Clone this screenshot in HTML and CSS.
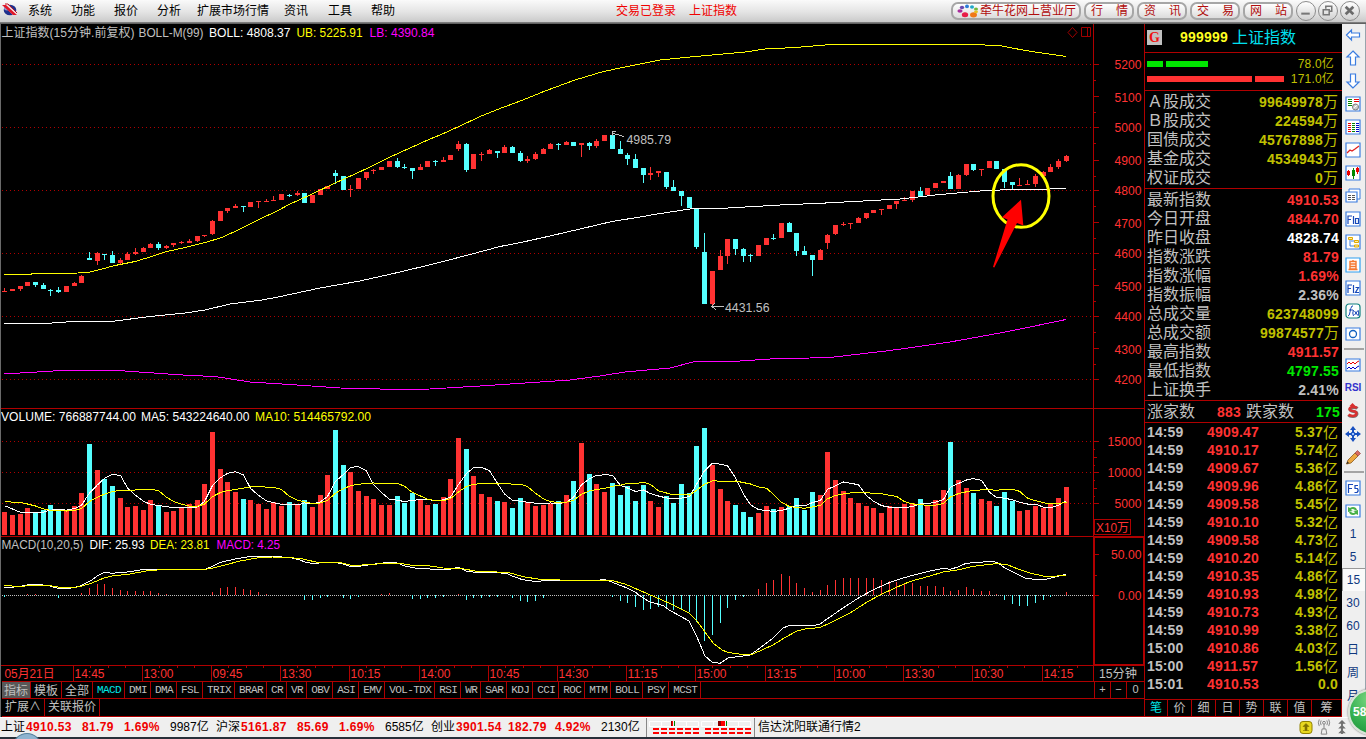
FILE: index.html
```html
<!DOCTYPE html>
<html lang="zh-CN">
<head>
<meta charset="utf-8">
<title>上证指数</title>
<link rel="stylesheet" href="styles.css">
</head>
<body>
<div class="app">
  <header class="topbar">
    <svg class="logo" viewBox="0 0 16 14"><ellipse cx="8" cy="7" rx="6.3" ry="5.3" fill="#20308c"/><ellipse cx="5" cy="5" rx="3" ry="2.5" fill="#8fa0d8"/><path d="M0 1h5l10 9v2h-4z" fill="#f6e8ea"/><path d="M0 2l4 0 11 10-4 0z" fill="#e01828"/><path d="M3 1l3 0 9 9" stroke="#c01020" fill="none"/></svg>
    <nav class="menu">
      <span>系统</span><span>功能</span><span>报价</span><span>分析</span><span class="wide">扩展市场行情</span><span>资讯</span><span>工具</span><span>帮助</span>
    </nav>
    <div class="login"><span>交易已登录</span><span>上证指数</span></div>
    <div class="buttons">
      <a class="pill brand"><svg viewBox="0 0 22 14"><g><ellipse cx="5" cy="3.5" rx="2.2" ry="1.8" fill="#6a48b0"/><ellipse cx="10" cy="2.4" rx="2" ry="1.8" fill="#2c7cd8"/><ellipse cx="15" cy="3" rx="2" ry="1.7" fill="#22a8c8"/><ellipse cx="19" cy="5" rx="2" ry="1.6" fill="#74b83a"/><ellipse cx="3" cy="7" rx="2.6" ry="1.8" fill="#a82c9c"/><ellipse cx="8" cy="10.8" rx="3.2" ry="2.5" fill="#e81c48"/><ellipse cx="16.5" cy="10.8" rx="3.5" ry="2.6" fill="#f07818"/><ellipse cx="19" cy="7.8" rx="2" ry="1.4" fill="#e8c020"/></g></svg><b>牵牛花网上营业厅</b></a>
      <a class="pill"><b>行</b><b>情</b></a><a class="pill"><b>资</b><b>讯</b></a><a class="pill"><b>交</b><b>易</b></a><a class="pill"><b>网</b><b>站</b></a>
    </div>
    <div class="winbtns">
      <i><svg viewBox="0 0 20 20"><path d="M5 12.5h10v2.4H5z" fill="#777"/></svg></i>
      <i><svg viewBox="0 0 20 20"><g fill="none" stroke="#777" stroke-width="1.8"><path d="M8 8V5h7v6h-3"/><path d="M5 9h7v6H5z"/></g></svg></i>
      <i><svg viewBox="0 0 20 20"><path d="M5.5 5.5l9 9m0-9l-9 9" stroke="#6b6b6b" stroke-width="3.2"/></svg></i>
    </div>
  </header>

  <main class="main">
    <section class="charts">
      <svg id="plot" class="plot" viewBox="0 24 1144 657"></svg>
      <div class="tabs">
        <div class="taglist"><span class="cj on">指标</span><span class="cj">模板</span><span class="cj">全部</span><span class="cur">MACD</span><span>DMI</span><span>DMA</span><span>FSL</span><span>TRIX</span><span>BRAR</span><span>CR</span><span>VR</span><span>OBV</span><span>ASI</span><span>EMV</span><span>VOL-TDX</span><span>RSI</span><span>WR</span><span>SAR</span><span>KDJ</span><span>CCI</span><span>ROC</span><span>MTM</span><span>BOLL</span><span>PSY</span><span>MCST</span></div>
        <div class="zoomers"><span>+</span><span>−</span><span>0</span></div>
      </div>
      <div class="tabs2"><span>扩展∧</span><span>关联报价</span></div>
    </section>

    <aside class="quote">
      <div class="title"><em>G</em><b>999999</b><span>上证指数</span></div>
      <div class="flows">
        <div class="flow up"><i style="width:16px"></i><i style="width:42px"></i><span>78.0亿</span></div>
        <div class="flow down"><i style="width:105px"></i><i style="width:29px"></i><span>171.0亿</span></div>
      </div>
      <div class="block" id="turnover"></div>
      <div class="block" id="index"></div>
      <div class="breadth"><span>涨家数</span><b class="r">883</b><span>跌家数</span><b class="g">175</b></div>
      <div class="ticks" id="ticks"></div>
      <div class="qtabs"><span class="on">笔</span><span>价</span><span>细</span><span>日</span><span>势</span><span>联</span><span>值</span><span>筹</span></div>
    </aside>

    <aside class="tools">
      <i><svg viewBox="0 0 16 16"><path d="M1.5 8L6.5 3v3h8v4h-8v3z" fill="#fff" stroke="#3b7de0" stroke-width="1.2"/></svg></i>
      <i><svg viewBox="0 0 16 16"><path d="M8 1L14 7h-3.500v8h-5V7H2z" fill="#fff" stroke="#3b7de0" stroke-width="1.2"/></svg></i>
      <i><svg viewBox="0 0 16 16"><path d="M8 15L2 9h3.500V1h5v8H14z" fill="#fff" stroke="#3b7de0" stroke-width="1.2"/></svg></i>
      <i><svg viewBox="0 0 16 16"><path class="fr" d="M1 1h14v14H1z"/><path d="M3 3.500h4M3 5.500h4M3 7.500h4M3 9.500h4" stroke="#080"/><path d="M9 3.500h5M9 5.500h5" stroke="#e00"/><circle cx="10.500" cy="11" r="3" fill="#ccc" stroke="#777"/><path d="M8.500 12l4-3" stroke="#fff"/></svg></i>
      <i><svg viewBox="0 0 16 16"><path class="fr" d="M1 1h14v14H1z"/><path d="M3 4.500h3M3 6.500h3M3 8.500h3M3 10.500h3M3 12.500h3" stroke="#e00"/><path d="M7 4.500h3M7 6.500h3M7 8.500h3M7 10.500h3M7 12.500h3" stroke="#080"/><path d="M11 4.500h3M11 6.500h3M11 8.500h3M11 10.500h3M11 12.500h3" stroke="#00c"/></svg></i>
      <i><svg viewBox="0 0 16 16"><path class="fr" d="M1 1h14v14H1z"/><path d="M2 11l3-3 2 1 3-2 4-3" stroke="#e02020" stroke-width="1.300" fill="none"/></svg></i>
      <i><svg viewBox="0 0 16 16"><path class="fr" d="M1 1h14v14H1z"/><path d="M3.500 5v6M12.500 2v7" stroke="#e00"/><path d="M8.500 3v11" stroke="#080"/><path d="M2 6h3v4H2zM11 3h3v4h-3z" fill="#e00"/><path d="M7 5h3v6H7z" fill="#080"/></svg></i>
      <i><svg viewBox="0 0 16 16"><path d="M4 1h11v10H4z" fill="#fff" stroke="#3b7de0"/><path class="fr" d="M1 4h11v10H1z"/><path d="M3 7.500h3M7 7.500h3M3 9.500h3M7 9.500h3M3 11.500h3M7 11.500h3" stroke="#555"/></svg></i>
      <i><svg viewBox="0 0 16 16"><path class="fr" d="M1 1h14v14H1z"/><path d="M3 13V5h4M3 8.500h3M8.500 5v8M10.500 7.500h3v5h-3z" stroke="#1848b8" stroke-width="1.200" fill="none"/></svg></i>
      <i><svg viewBox="0 0 16 16"><path class="fr" d="M1 1h14v14H1z"/><path d="M5 6v6h4M6 7h4" stroke="#3b7de0" fill="none"/><path d="M3.500 3.500h4v2h-4zM9.500 6.500h4v2h-4zM9.500 11h4v2h-4z" fill="#fff0a0" stroke="#e0a800"/></svg></i>
      <i><svg viewBox="0 0 16 16"><path class="fr lt" d="M1 1h14v14H1z"/><path d="M8 3v1M5 4.500h6V12H5zM5 7h6M5 9.500h6M3.500 12.500h9" stroke="#f57830" stroke-width="1.400" fill="none"/></svg></i>
      <i><svg viewBox="0 0 16 16"><path class="fr" d="M1 1h14v14H1z"/><path d="M3 13V5h4M3 8.500h3M8.500 5v8M10.500 7.500h3L10.500 12.500h3.500" stroke="#1848b8" stroke-width="1.200" fill="none"/></svg></i>
      <i><svg viewBox="0 0 16 16"><rect x="1" y="1" width="14" height="14" rx="3" fill="#fff" stroke="#108080" stroke-width="1.200"/><path d="M3 13q1.500 0 2-4t2-6h1M4 7h4M8.500 7q-1.500 3 0 6M13 7q1.500 3 0 6M9.500 8l3 4m0-4l-3 4" stroke="#1848b8" fill="none"/></svg></i>
      <i><svg viewBox="0 0 16 16"><path class="fr" d="M1 2h14v12H1z"/><circle cx="8" cy="8" r="3.500" fill="none" stroke="#1060c0" stroke-width="1.300"/></svg></i>
      <hr>
      <i><svg viewBox="0 0 16 16"><path class="fr" d="M1 2h14v12H1z"/><path d="M2 7l2-2 2 2 2-2 2 2 2-2 2-1" stroke="#e00" fill="none"/><path d="M2 12l2-2 2 2 2-2 2 2 2-2 2-1" stroke="#00c" fill="none"/></svg></i>
      <i class="rsi">RSI</i>
      <i><svg viewBox="0 0 16 16"><path d="M12.500 5.500q-1-1-4-1t-3.500 2q0 1.500 3.500 2t3.500 2.500q-.5 2.500-4 2.500t-4.500-1.500" stroke="#777" stroke-width="3" fill="none"/><path d="M12 5q-1-1-4-1t-3.500 2q0 1.500 3.500 2t3.500 2.500Q11 13 8 13t-4.500-1.500" stroke="#d83030" stroke-width="2.500" fill="none"/><path d="M7.500 0l3 3h-6z" fill="#d83030"/></svg></i>
      <i><svg viewBox="0 0 16 16"><path d="M8 0l3 4H5zM8 16l3-4H5zM0 8l4-3v6zM16 8l-4-3v6z" fill="#1850c0"/><path d="M8 3v10M3 8h10" stroke="#1850c0" stroke-width="2"/><path d="M6.500 6.500h3v3h-3z" fill="#9cc4ff" stroke="#1850c0"/></svg></i>
      <i><svg viewBox="0 0 16 16"><path d="M1.500 15l1.500-4 7-7 3 3-7 7z" fill="#eda840" stroke="#8a5a20" stroke-width=".8"/><path d="M10 4l2.500-2.500 3 3L13 7z" fill="#d86a60" stroke="#903830" stroke-width=".6"/><path d="M1.500 15l1-2.500 1.500 1.500z" fill="#222"/></svg></i>
      <hr>
      <i><svg viewBox="0 0 16 16"><path class="fr" d="M1 1h14v14H1z"/><path d="M3.500 13V4.500H8M3.500 8.500h3.500M13 5.500h-3v3h2.500q1.500 2.500-.5 4h-2.500" stroke="#1848b8" stroke-width="1.200" fill="none"/></svg></i>
      <i><svg viewBox="0 0 16 16"><path class="fr" d="M1 2h14v12H1z"/><path d="M3 4l2 1q3-2 6 0l1 2-2 0q-3-2-4 0l2 1-5 1zM13 12l-2-1q-3 2-6 0l-1-2 2 0q3 2 4 0l-2-1 5-1z" fill="#48b048"/></svg></i>
      <i>1</i><i>5</i><i class="sel">15</i><i>30</i><i>60</i><i>日</i><i>周</i><i>月</i>
    </aside>
  </main>

  <footer class="status">
    <div class="feed a"><span>上证</span><b class="p">4910.53</b><b class="c">81.79</b><b class="d">1.69%</b><span>9987亿</span></div>
    <div class="feed a"><span>沪深</span><b class="p">5161.87</b><b class="c">85.69</b><b class="d">1.69%</b><span>6585亿</span></div>
    <div class="feed z"><span>创业</span><b class="p">3901.54</b><b class="c">182.79</b><b class="d">4.92%</b><span>2130亿</span></div>
    <div class="gauge"><svg viewBox="0 0 104 20"><g fill="none" stroke="#fff"><path d="M.5 3.500h49v5h-49zM12.500 3v6M37.500 3v6M52.500 3.500h49v5h-49zM64.500 3v6M89.500 3v6"/></g><path d="M22 3h1v5h-1z" fill="#800"/><path d="M23 3h1v5h-1z" fill="#f00"/><path d="M25 3h1v5h-1zM77 3h1v5h-1z" fill="#080"/><path d="M69 3h3v5h-3z" fill="#800"/><path d="M72 3h4v5h-4z" fill="#f00"/><path d="M4 11h46M4 15h46M56 11h46M56 15h46" stroke="#f00" stroke-width="2" stroke-dasharray="6 2"/></svg></div>
    <div class="server">信达沈阳联通行情2</div>
    <div class="tray">
      <svg viewBox="0 0 14 14"><rect x="1" y="1" width="12" height="12" rx="3" fill="#e8d820" stroke="#908000"/><path d="M7 3l3 3H8v4H6V6H4zM4 10h6" fill="#807000" stroke="#807000" stroke-width=".6"/></svg>
      <svg viewBox="0 0 14 18"><g fill="none" stroke="#808080"><circle cx="7" cy="4" r="1.500"/><path d="M4 1.500Q2.500 4 4 6.500M2 .5Q0 4 2 7.500M10 1.500Q11.500 4 10 6.500M12 .5Q14 4 12 7.500M7 5.500v5M5 10.500h4L10 16H4z"/></g></svg>
      <svg viewBox="0 0 14 18"><path d="M7 1l4 4H3zM7 6l4 4H3zM7 11l4 4H3zM6 4h2v12H6z" fill="#707070"/></svg>
    </div>
  </footer>
  <div class="orb"></div>
  <div class="ball">58</div>
</div>
<script src="chart.js"></script>
</body>
</html>
```
FILE: styles.css
```css
* { box-sizing: border-box; }
body { margin: 0; background: #000; font: 12px "Liberation Sans", "Noto Sans CJK SC", sans-serif; overflow: hidden; }
i, em { font-style: normal; }
.app { position: relative; width: 1366px; height: 739px; display: flex; flex-direction: column; overflow: hidden; background: #28303a; }

/* top bar */
.topbar { height: 24px; flex: none; display: flex; align-items: center; padding-bottom: 2px; background: linear-gradient(#fafafa, #e4e4e4 50%, #cbcbcb 90%, #777 94%, #555); color: #000; white-space: nowrap; }
.logo { width: 16px; height: 14px; margin-left: 2px; margin-top: -2px; }
.menu { display: flex; margin-left: 10px; width: 588px; }
.menu span { width: 43px; line-height: 20px; }
.menu .wide { width: 87px; }
.menu span:nth-child(4) { width: 40px; }
.menu .wide + span { width: 44px; }
.login { display: flex; gap: 13px; width: 335px; color: #f00000; }
.login span { line-height: 20px; }
.buttons { display: flex; gap: 3px; }
.pill { height: 18px; width: 50px; display: flex; justify-content: space-between; align-items: center; padding: 0 4px 1px 5px; border: 2px solid #a6a6a6; border-radius: 7px; background: linear-gradient(#ffffff, #dcdcdc); color: #b00c0c; }
.pill b { font-weight: 400; line-height: 14px; }
.pill.brand { width: 130px; padding: 0 4px; justify-content: flex-start; gap: 1px; }
.pill.brand svg { width: 22px; height: 14px; flex: none; }
.winbtns { display: flex; gap: 2px; margin-left: 3px; }
.winbtns i { width: 20px; height: 20px; border: 1.5px solid #8c8c8c; border-radius: 50%; background: linear-gradient(#fff, #d0d0d0); display: flex; }
.winbtns svg { width: 17px; height: 17px; }

.main { display: flex; height: 693px; flex: none; }

/* charts */
.charts { width: 1144px; border-left: 1px solid #6a6a6a; background: #000; overflow: hidden; }
.plot { display: block; width: 1144px; height: 657px; margin-left: -1px; }
.plot text { font-family: "Liberation Sans", "Noto Sans CJK SC", sans-serif; font-size: 12px; }
.tabs { height: 18px; display: flex; justify-content: space-between; border-top: 1px solid #b00000; border-bottom: 1px solid #b00000; margin-left: 1px; }
.taglist, .zoomers { display: flex; }
.taglist span { padding: 0 3px 0 4px; border-right: 1px solid #b00000; color: #c0c0c0; font: 11px/16px "Liberation Mono", monospace; letter-spacing: -.6px; }
.taglist .cj { width: 31px; padding: 0 2px 0 3px; font: 12px/16px "Noto Sans CJK SC", sans-serif; letter-spacing: 0; overflow: hidden; }
.taglist .cj.on { width: 29px; background: #585858; padding: 0 2px; }
.taglist .cur { color: #00e6e6; }
.zoomers span { width: 16px; text-align: center; line-height: 15px; font-size: 11px; color: #c0c0c0; border-left: 1px solid #b00000; }
.zoomers span:last-child { width: 18px; }
.tabs2 { height: 18px; display: flex; border-bottom: 1px solid #b00000; margin-left: 1px; color: #c0c0c0; }
.tabs2 span { border-right: 1px solid #b00000; padding: 0 3px; line-height: 17px; overflow: hidden; }

/* quote panel */
.quote { width: 198px; border-left: 1px solid #b00000; background: #000; color: #c0c0c0; font-size: 16px; overflow: hidden; white-space: nowrap; }
.title { height: 29px; border-bottom: 1px solid #b00000; display: flex; align-items: center; padding: 0 0 2px 2px; }
.title em { width: 15px; height: 15px; background: #c0c0c0; color: #f01010; font: bold 14px/15px "Liberation Serif", serif; text-align: center; }
.title b { margin-left: 18px; font-size: 14px; letter-spacing: .2px; color: #ffff20; }
.title span { margin-left: 4px; color: #00e0f0; line-height: 26px; padding-top: 1px; }
.flows { height: 38px; padding: 3px 8px 0 2px; border-bottom: 1px solid #b00000; }
.flow { height: 15px; display: flex; gap: 3px; align-items: center; }
.flow i { height: 6px; background: #00e600; }
.flow.down i { background: #ff3232; }
.flow span { margin-left: auto; font-size: 12px; line-height: 14px; color: #c0c000; letter-spacing: .2px; }
.block { padding: 1px 3px 0 2px; border-bottom: 1px solid #b00000; }
#turnover { height: 98px; padding-right: 4px; }
#index { height: 212px; }
.row { height: 19px; display: flex; justify-content: space-between; align-items: center; line-height: 19px; }
.row b, .tick b, .breadth b { font: bold 14px/16px "Liberation Sans", sans-serif; letter-spacing: .2px; display: flex; align-items: center; }
u { text-decoration: none; font: 15px/15px "Noto Sans CJK SC", sans-serif; letter-spacing: 0; height: 16px; margin-top: -1px; }
.y { color: #c0c000; } .r { color: #ff3232; } .g { color: #00e600; } .w { color: #fff; } .s { color: #c0c0c0; }
.breadth { height: 22px; display: flex; align-items: center; padding-left: 2px; border-bottom: 1px solid #b00000; }
.breadth .r { width: 46px; justify-content: flex-end; margin-right: 5px; }
.breadth .g { margin-left: auto; margin-right: 2px; }
.breadth span { line-height: 20px; }
.ticks { height: 276px; padding: 0 4px 0 2px; }
.tick { display: grid; grid-template-columns: 60px 1fr 1fr; height: 18px; align-items: center; }
.tick b:first-child { letter-spacing: .1px; }
.tick b:last-child { justify-content: flex-end; }
.qtabs { display: flex; height: 18px; border: solid #b00000; border-width: 1px 1px 1px 0; font-size: 12px; }
.qtabs span { width: 24px; text-align: center; line-height: 16px; border-right: 1px solid #b00000; }
.qtabs span:first-child { width: 23px; }
.qtabs span:last-child { flex: 1; border: 0; }
.qtabs .on { color: #00e6e6; }

/* toolbar */
.tools { width: 24px; background: #efefef; border-right: 1px solid #98a4ac; display: flex; flex-direction: column; overflow: hidden; }
.tools i { height: 23px; flex: none; display: flex; align-items: center; justify-content: center; color: #103880; padding-right: 1px; }
.tools i:first-child { margin-top: -1px; }
.tools svg { width: 16px; height: 16px; margin-top: 1px; }
.tools hr { width: 20px; height: 2px; margin: 3px 2px; border: 0; flex: none; background: #a4a4a4; }
.fr { fill: #fff; stroke: #3b7de0; stroke-width: 1.2; }
.fr.lt { stroke: #30a0f0; }
.tools .rsi { font: bold 10px "Liberation Sans", sans-serif; color: #3434cc; }
.tools .sel { border-top: 1px solid #999; border-left: 1px solid #999; background: #fafafa; }

/* status bar */
.status { height: 20px; flex: none; display: flex; align-items: center; background: #efefef; border-top: 1px solid #fff; color: #000; white-space: nowrap; }
.feed { display: flex; line-height: 19px; padding-left: 1px; }
.feed.a { width: 215px; }
.feed.z { width: 216px; }
.feed b { color: #f00000; letter-spacing: .35px; }
.feed .p { width: 57px; padding-left: 1px; }
.feed .c { width: 41px; }
.feed .d { width: 47px; padding-left: 1px; }
.feed.z .p { width: 53px; } .feed.z .c { width: 46px; }
.gauge { width: 109px; height: 19px; padding-left: 2px; border-left: 1px solid #888; border-right: 1px solid #888; }
.gauge svg { width: 104px; height: 20px; display: block; }
.server { width: 544px; padding-left: 3px; line-height: 19px; }
.tray { display: flex; align-items: center; gap: 3px; }
.tray svg { width: 14px; height: 17px; margin-right: 1px; }
.orb { position: absolute; left: 13px; top: 733px; width: 28px; height: 26px; border-radius: 50%; background: #8fb4d0; border: 1px solid #54809c; }
.ball { position: absolute; left: 1348px; top: 689px; width: 46px; height: 46px; border-radius: 50%; border: 2px solid #d8e4d8; box-shadow: 0 0 2px #555; background: radial-gradient(circle at 50% 20%, #7ed884, #34b050 60%, #1c9038); color: #fff; font: bold 12px/42px "Liberation Sans", sans-serif; padding-left: 3px; }
```
FILE: chart.js
```js
const RED = '#ff3232', CYAN = '#54ffff', LINE = '#b00000';
const bx = i => Math.round(4.285 + 7.691 * i);
let out = '';
const rect = (x, y, w, h, f) => { out += `<rect x="${x}" y="${y}" width="${w}" height="${h}" fill="${f}"/>`; };
const text = (x, y, s, f, len, anchor) => { out += `<text x="${x}" y="${y}" fill="${f}"${anchor ? ` text-anchor="${anchor}"` : ''}${len ? ` textLength="${len}" lengthAdjust="spacingAndGlyphs"` : ''}>${s}</text>`; };
const poly = (pts, c) => { out += `<polyline points="${pts}" fill="none" stroke="${c}" stroke-width="1" shape-rendering="crispEdges"/>`; };
const dots = (y, c, step) => { out += `<path d="M2 ${y + .5}H1093" stroke="${c}" stroke-dasharray="1 ${step}" shape-rendering="crispEdges"/>`; };

/* colour, body top, body bottom, high, low */
const candles = `r291,292,288,292 r289,291 r286,289,286,291 r282,286 c282,285,282,287 c285,289,283,289 c290,291,289,296 c290,292,287,293 r286,292 r283,286,282,286 r276,283,275,283 c258,260,252,260 r253,261,252,265 c254,255,254,260 c255,263,251,263 r260,263,258,264 r254,260,252,260 r252,254,248,255 r248,252,247,252 r244,248,243,248 c244,248,242,250 r246,248,245,249 r243,245,243,247 r242,243,241,244 r241,243,239,243 r236,241,236,242 r235,236,235,237 r221,234,220,235 r211,221 r208,211,208,213 r206,208,204,208 c206,207,206,212 r202,207 r201,202,201,208 r201,202,199,202 r200,201,196,201 r194,200 c195,196,194,197 r193,195,191,196 c193,203 r195,203 r189,195 r186,189 c173,176,170,184 c176,190 r189,190,185,197 r178,189 r172,178,172,180 r170,171,169,174 r167,170 r161,167 c161,167,158,168 c167,168,164,169 c168,171,168,179 r167,170,164,170 r161,167 c161,162,160,166 r160,162,157,162 r155,160 r144,149,141,151 c144,170,143,172 r154,169 r154,155,152,161 r150,154,149,154 c151,153,151,158 r147,153,145,153 c147,153,146,153 c153,161,151,162 r159,161,156,163 r154,159,152,160 r149,154,148,154 r144,149,143,149 c144,145,143,150 r142,145,141,145 c142,146 r143,145,143,157 c143,146,142,150 r141,146,139,148 r135,141 c135,149,132,149 c149,154,141,154 c155,159,153,165 c159,168,154,168 c168,175,168,183 r173,175,167,180 r171,173,171,177 c172,187,172,189 c187,191,180,191 c191,196,191,206 c197,208 c208,247,208,249 c252,304,233,304 r271,304,271,306 r256,270,250,270 r239,256,239,264 c239,249,239,255 c249,256,248,262 c255,256,254,262 r245,256 r238,245 c238,239,234,240 r223,238 c223,232,222,232 c233,251,233,256 c251,255,246,255 c255,260,255,276 r250,260,249,260 r235,243,234,249 r225,234,225,235 r224,225,222,226 r223,224,223,229 r218,223,217,223 r213,218,213,219 r210,213 r209,210,209,215 r205,209 r201,204,201,209 r200,201,197,201 r191,200,191,202 c191,196,187,196 r188,195 r183,188 r181,183 c176,189,172,189 r175,189,174,189 r164,175,164,176 c164,170,164,171 r169,170,169,176 r161,168 c161,169 c169,182,169,188 c182,185,182,190 r185,186,178,186 r184,185,180,185 r176,184,174,187 r172,176,171,176 r167,172,164,172 r161,167,159,169 r156,161,155,162`.split(' ');

/* bar tops in thirds of a pixel below y=400 */
const volumes = `336r 345r 342r 324r 340c 330c 315c 333c 333r 318r 279r 132c 210r 237c 258c 294r 321r 318r 330r 300r 315c 336r 333r 324r 312r 300r 252r 96r 207r 246r 276r 297c 300r 312r 327r 306r 318r 306c 315r 300c 321r 285r 225r 90c 195c 216r 273r 288r 297r 315r 315r 288c 309c 279c 300r 315r 312c 291r 237r 114r 147c 228r 282r 291r 303c 306r 324c 294c 306r 318r 315r 312r 303c 285r 243c 129r 222c 252r 276r 249c 285c 258c 303c 255c 303r 321r 288c 309c 252c 279c 138c 84c 195r 267r 303r 315c 336c 351c 339r 318r 327c 321r 318c 294c 330c 276c 285r 156r 240r 273r 294r 309r 318r 324r 339r 318r 321r 312r 309r 297c 315r 300r 270r 126c 240r 264r 279c 297r 303r 318c 276c 303c 333r 330r 318r 324r 312r 294r 261r`.split(' ');

const hist = {0:591,3:582,4:582,7:594,10:579,11:564,12:552,13:552,14:564,15:570,16:573,17:573,18:573,19:573,20:579,21:582,27:576,28:564,29:561,30:561,31:567,32:570,33:576,34:582,39:600,40:600,41:594,42:591,44:594,45:597,46:591,49:582,50:579,53:597,54:597,55:594,56:594,57:591,59:582,60:600,61:594,62:594,63:591,64:591,66:594,67:603,68:606,69:603,70:594,79:591,80:603,81:609,82:621,83:630,84:627,85:621,86:627,87:630,88:627,89:636,90:666,91:723,92:705,93:669,94:624,95:600,96:591,98:567,99:549,100:540,101:522,102:528,103:549,104:564,105:576,106:570,107:555,108:540,109:534,110:534,111:534,112:534,113:534,114:540,115:543,116:546,117:552,118:549,119:558,120:558,121:558,122:561,123:573,124:570,125:561,126:567,127:573,128:573,129:582,130:600,131:612,132:618,133:618,134:609,135:600,136:591,138:576};

[64,127,190,253,316,379,441,472,503].forEach(y => dots(y, LINE, 3));
dots(595, '#c0c0c0', 1);

candles.forEach((s, i) => {
  const c = s[0] === 'r' ? RED : CYAN, v = s.slice(1).split(',').map(Number), x = bx(i);
  rect(x - 2, v[0], 5, v[1] - v[0], c);
  if (v.length > 2) rect(x, v[2], 1, v[3] - v[2], c);
});
const tops = volumes.map(v => parseInt(v));
volumes.forEach((v, i) => {
  const y = 400 + Math.round(parseInt(v) / 3);
  rect(bx(i) - 2, y, 5, 535 - y, v.endsWith('r') ? RED : CYAN);
});
const average = (n, seed) => tops.map((_, i) => {
  const z = i < n - 1 ? seed[i] : tops.slice(i - n + 1, i + 1).reduce((a, b) => a + b) / n;
  return `${bx(i) + .5},${(400 + z / 3).toFixed(1)}`;
}).join(' ');
poly(average(5, [317,327,337,338]), '#fff');
poly(average(10, [303,307,307,312,318,327,331,332,333]), '#ff0');
for (const i in hist) {
  const y = 400 + Math.round(hist[i] / 3);
  if (hist[i] < 586) rect(bx(+i), y, 1, 595 - y, RED); else rect(bx(+i), 595, 1, y - 595, CYAN);
}

poly('4,274.5 31,274.3 32,273.5 78,273 90,272 100,269.5 115,265.5 135,261.5 150,257 165,252 185,247.5 205,242.5 222,237.5 240,229 260,219 277,211 290,204 310,195 335,183 355,174 370,167 390,157 410,148 430,139 440,135 459,126.500 480,116.500 500,108.500 523,100 545,91 575,80 600,72.500 615,69 640,64 660,60 685,57.500 712,55 745,52 765,49 795,47.500 825,45 840,44.300 978,44.300 990,45.500 1002,46 1020,49.500 1035,52 1066,56.500', '#ff0');
poly('4,324 45,323.500 80,321 115,321 150,316.500 185,313 205,310 230,304 262,300 278,297 320,288 360,281 400,272 440,262.300 470,254.500 500,246.500 523,242 550,236 580,229 612,221.500 640,217 657,214 690,209 723,208.300 780,205 820,203.300 900,199 940,194.500 980,191 1000,190 1030,189.300 1050,189 1066,188.300', '#fff');
poly('4,374 70,370 110,370 190,375.500 215,376.500 250,382 290,384.500 340,388 400,389.500 430,389 480,386 570,380 600,376 625,372 670,368 695,361.500 725,362 770,359 830,357.500 890,350.500 950,342 1000,333 1030,327 1066,319.500', '#f0f');
poly('4,587.300 15,587 22,586 33,584 40,584.500 50,586 58,588.300 70,588.300 80,586 82,585 92,580 97,576 104,572.300 112,573.300 127,572 147,569 170,569 186,569.300 205,569.300 212,566.500 220,562.500 235,559 247,557 258,556.300 270,556.300 290,557.500 300,560 305,562 312,563.300 335,562.300 343,564 350,566.300 362,566 378,563.500 388,562.500 397,563 405,566 415,568 435,569.300 450,569.300 458,567.300 467,571.300 475,572.300 492,572.300 507,573.500 512,576 522,579.500 535,581.500 552,580 600,580 605,579.500 613,582.500 627,588 635,592 643,598 650,602 663,605.500 670,610.500 680,616 689,621 697,637 705,656 712,662 720,663.300 728,658 750,655 760,648 773,638 783,628 790,625.300 812,626 820,624 827,619 843,608 860,597 875,589 892,581.500 910,576 930,571 943,568.300 950,569.300 958,567 966,563.300 980,562.300 990,561.300 997,562.300 1005,568 1013,572 1025,578 1035,579.500 1045,579.500 1055,577 1066,574.300', '#fff');
poly('4,585.300 12,586 25,586 33,585 45,585 60,587.300 75,587.300 82,586 92,583 104,578 112,576 130,574 150,570.300 175,569.300 205,569.300 212,568.300 225,565 240,561 260,557.500 272,557 290,557.500 303,559 317,562.300 340,562.500 350,565 362,565 380,563.800 398,563 410,565 430,566 443,568 460,568.300 475,571 508,572.500 525,577 540,579.300 560,580 585,580 600,581 610,580 625,584 640,590.500 655,597 670,603.500 689,613 697,621 705,632 713,643 722,650 728,652.500 743,654.500 752,654.300 762,650 773,645 785,637.500 797,631 805,629 820,627.500 830,623 850,613 868,601.500 880,595 895,588 910,581.500 930,576 943,572 960,569.500 972,566.500 997,563.500 1008,565 1018,569 1030,573 1043,576 1057,576 1066,575', '#ff0');

/* frame */
rect(1, 408, 1143, 1, LINE); rect(1, 536, 1143, 1, LINE); rect(1, 665, 1143, 1, LINE);
rect(1093, 24, 1, 657, LINE);
out += `<rect x="1094" y="537" width="50" height="128" fill="none" stroke="${LINE}" stroke-width="2"/>`;
[64,96,127,160,190,222,253,285,316,348,379].forEach((y, i) => {
  rect(1094, y, 5, 1, LINE);
  if (i < 10) rect(1094, y + 16, 2, 1, LINE);
  text(1141.5, [69,102,132,165,195,228,258,291,321,354,384][i], 5200 - i * 100, RED, 27, 'end');
});
[[441,'15000',34],[472,'10000',34],[503,'5000',27]].forEach(([y, s, w]) => {
  rect(1094, y, 5, 1, LINE);
  [8,16,24].forEach(d => d + y < 510 && rect(1094, y + d, d === 16 ? 3 : 1, 1, LINE));
  text(1141.500, y + 5, s, RED, w, 'end');
});
[[554,'50.00',30.500],[595,'0.00',23.500]].forEach(([y, s, w]) => { rect(1095, y, 4, 1, LINE); text(1141.500, y + 5, s, RED, w, 'end'); });
rect(1095, 575, 2, 1, LINE);
out += `<rect x="1094.500" y="519.500" width="36" height="15" fill="#000" stroke="${LINE}"/>`;
text(1096, 531.500, 'X10万', RED, 33);

['14:45','13:00','09:45','13:30','10:15','14:00','10:45','14:30','11:15','15:00','13:15','10:00','13:30','10:30','14:15'].forEach((s, i) => {
  const x = [73,142,211,280,349,419,488,557,626,695,765,834,903,972,1042][i];
  rect(x, 665, 1, 16, LINE);
  text(x + 1.500, 678, s, RED, 30);
  [17,35,52].forEach(d => x + d < 1093 && rect(x + d, 666, 1, 2, LINE));
});
text(4.500, 678, '05月21日', RED, 50);
text(1099, 678, '15分钟', '#c0c0c0', 38);

text(1.500, 37, '上证指数(15分钟.前复权)', '#c0c0c0', 133);
text(138.500, 37, 'BOLL-M(99)', '#c0c0c0', 65);
text(209, 37, 'BOLL: 4808.37', '#fff', 81.500);
text(296.500, 37, 'UB: 5225.91', '#ff0', 66);
text(369.500, 37, 'LB: 4390.84', '#f0f', 65);
text(1, 421, 'VOLUME: 766887744.00', '#fff', 135);
text(141, 421, 'MA5: 543224640.00', '#fff', 108.500);
text(255, 421, 'MA10: 514465792.00', '#ff0', 116);
text(1.500, 549, 'MACD(10,20,5)', '#c0c0c0', 82);
text(89.500, 549, 'DIF: 25.93', '#fff', 55);
text(150, 549, 'DEA: 23.81', '#ff0', 59.500);
text(216.500, 549, 'MACD: 4.25', '#f0f', 63.500);

text(626.500, 144, '4985.79', '#c0c0c0', 44.500);
text(725, 312, '4431.56', '#c0c0c0', 44.500);
out += `<g fill="none" stroke="#c0c0c0" shape-rendering="crispEdges"><path d="M612 133L624 136.500M616 131.500H613L612 135.500"/><path d="M713 306.500H724M715 303L712 306.500L716 309.500"/></g>`;
out += `<g fill="none" stroke="#a00000"><path d="M1072.500 27.500l4.500 5-4.500 5-4.500-5z"/><path d="M1081.500 27.500h9v9h-9zM1087.500 27.500v9"/></g>`;
out += `<ellipse cx="1021" cy="196" rx="28" ry="31.300" fill="none" stroke="#ff0" stroke-width="3"/><path d="M1021 199.700L1023.300 225.500L1017 223L994.300 267.500L993 267L1007.500 219.500L1002 217.300Z" fill="#f00"/>`;
document.getElementById('plot').innerHTML = out;

/* quote tables */
const num = (s, cls) => `<b class="${cls}">${s.replace(/[万亿]/, m => `<u>${m}</u>`)}</b>`;
const rows = (id, list) => { document.getElementById(id).innerHTML = list.map(([k, v, c]) => `<div class="row"><span>${k}</span>${num(v, c)}</div>`).join(''); };
rows('turnover', [['Ａ股成交','99649978万','y'],['Ｂ股成交','224594万','y'],['国债成交','45767898万','y'],['基金成交','4534943万','y'],['权证成交','0万','y']]);
rows('index', [['最新指数','4910.53','r'],['今日开盘','4844.70','r'],['昨日收盘','4828.74','w'],['指数涨跌','81.79','r'],['指数涨幅','1.69%','r'],['指数振幅','2.36%','s'],['总成交量','623748099','y'],['总成交额','99874577万','y'],['最高指数','4911.57','r'],['最低指数','4797.55','g'],['上证换手','2.41%','s']]);
const ticks = '14:59 4909.47 5.37亿|14:59 4910.17 5.74亿|14:59 4909.67 5.36亿|14:59 4909.96 4.86亿|14:59 4909.58 5.45亿|14:59 4910.10 5.32亿|14:59 4909.58 4.73亿|14:59 4910.20 5.14亿|14:59 4910.35 4.86亿|14:59 4910.93 4.98亿|14:59 4910.73 4.93亿|14:59 4910.99 3.38亿|15:00 4910.86 4.03亿|15:00 4911.57 1.56亿|15:01 4910.53 0.0';
document.getElementById('ticks').innerHTML = ticks.split('|').map(l => { const [t, p, v] = l.split(' '); return `<div class="tick">${num(t, 's')}${num(p, 'r')}${num(v, 'y')}</div>`; }).join('');
```
